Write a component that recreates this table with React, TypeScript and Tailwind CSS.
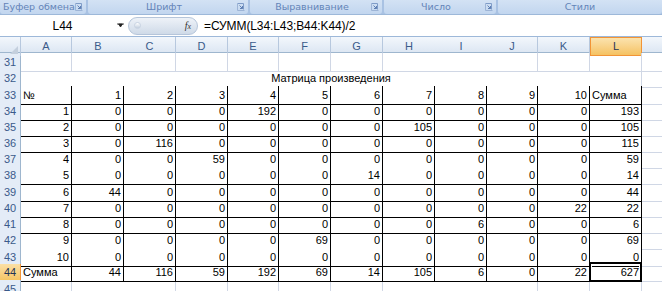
import React from 'react';

const grid =
  'grid grid-cols-[21px_51px_52px_52px_52px_51px_52px_52px_52px_52px_51px_52px_52px_20px]';

const letters = ['A', 'B', 'C', 'D', 'E', 'F', 'G', 'H', 'I', 'J', 'K', 'L'];

const data: (string | number)[][] = [
  [1, 0, 0, 0, 192, 0, 0, 0, 0, 0, 0, 193],
  [2, 0, 0, 0, 0, 0, 0, 105, 0, 0, 0, 105],
  [3, 0, 116, 0, 0, 0, 0, 0, 0, 0, 0, 115],
  [4, 0, 0, 59, 0, 0, 0, 0, 0, 0, 0, 59],
  [5, 0, 0, 0, 0, 0, 14, 0, 0, 0, 0, 14],
  [6, 44, 0, 0, 0, 0, 0, 0, 0, 0, 0, 44],
  [7, 0, 0, 0, 0, 0, 0, 0, 0, 0, 22, 22],
  [8, 0, 0, 0, 0, 0, 0, 0, 6, 0, 0, 6],
  [9, 0, 0, 0, 0, 69, 0, 0, 0, 0, 0, 69],
  [10, 0, 0, 0, 0, 0, 0, 0, 0, 0, 0, 0],
];

const totals = [44, 116, 59, 192, 69, 14, 105, 6, 0, 22, 627];

// rows with a bottom border in the table; 37 and 42 lost theirs in the screenshot
const noBottom = [37, 42];

function Launcher() {
  return (
    <svg width="8" height="8" viewBox="0 0 8 8" className="shrink-0">
      <path d="M0.5 0.5h6v6" fill="none" stroke="#7f9cc8" />
      <path d="M0.5 0.5v7h7" fill="none" stroke="#9db4d6" />
      <path d="M2.5 2.5l3 3M3 5.5h2.5V3" fill="none" stroke="#5f7fb3" />
    </svg>
  );
}

function Group({ label, w, launcher, left }: { label: string; w: string; launcher?: boolean; left?: boolean }) {
  return (
    <div className={`${w} h-full flex items-center rounded-b-[3px] bg-gradient-to-b from-[#d3e2f4] to-[#c2d6ef] px-[3px]`}>
      <span
        className={`flex-1 ${left ? 'text-left' : 'text-center'} text-[9.5px] leading-none text-[#6384b8] font-['DejaVu_Sans',sans-serif] whitespace-nowrap`}
      >
        {label}
      </span>
      {launcher && <Launcher />}
    </div>
  );
}

function RowHead({ n, active }: { n: number; active?: boolean }) {
  return active ? (
    <div className="flex items-center justify-center bg-gradient-to-b from-[#fbe0a6] to-[#f5c460] border-r border-b border-[#f29436] text-[11px] text-[#1f3556]">
      {n}
    </div>
  ) : (
    <div className="flex items-start pt-[1px] justify-center bg-[#e4ecf7] border-r border-[#9eb6ce] border-b border-b-[#c5d4e6] text-[11px] text-[#3a5a8a]">
      {n}
    </div>
  );
}

function TableRow({ n, cells, h, total }: { n: number; cells: (string | number)[]; h: string; total?: boolean }) {
  const bottom = noBottom.includes(n) ? '' : 'border-b border-b-black';
  return (
    <div className={`${grid} ${h}`}>
      <RowHead n={n} active={total} />
      {cells.map((c, i) => {
        const left = i === 0 && typeof c === 'string';
        return (
          <div
            key={i}
            className={`relative flex items-center border-r border-black ${bottom} ${left ? 'justify-start pl-[2px]' : 'justify-end pr-[2px]'}`}
          >
            {c}
            {total && i === 11 && (
              <div className="absolute inset-x-[-1px] top-[-2px] bottom-[-1px] border-2 border-black">
                <div className="h-full w-full border border-white" />
              </div>
            )}
          </div>
        );
      })}
      <div className="border-b border-[#d0d7e5]" />
    </div>
  );
}

export default function App() {
  return (
    <div className="w-[662px] h-[291px] overflow-hidden bg-white font-['Liberation_Sans',Arial,sans-serif] text-[11px] text-black">
      {/* ribbon group labels */}
      <div className="h-[14px] flex gap-[2px] bg-[#a9c2e3]">
        <Group label="Буфер обмена" w="w-[86px]" launcher left />
        <Group label="Шрифт" w="w-[160px]" launcher />
        <Group label="Выравнивание" w="w-[132px]" launcher />
        <Group label="Число" w="w-[112px]" launcher />
        <Group label="Стили" w="flex-1" />
      </div>

      {/* formula bar */}
      <div className="h-[23px] flex items-center bg-white border-t border-b border-[#9db8d9]">
        <div className="w-[126px] flex items-center">
          <span className="flex-1 text-center text-[12px] pl-[8px]">L44</span>
          <svg width="7" height="5" viewBox="0 0 7 5" className="mr-[2px]">
            <path d="M0 1h7M1.5 1l2 3l2-3z" fill="#222" stroke="#222" strokeWidth="0.8" />
          </svg>
        </div>
        <div className="ml-[2px] w-[70px] h-[18px] rounded-full bg-gradient-to-b from-[#eef2f8] to-[#cfdae8] border border-[#b5c5da] flex items-center px-[5px]">
          <div className="w-[7px] h-[7px] rounded-full bg-gradient-to-b from-white to-[#c3cfdf] border border-[#c8d3e2]" />
          <span className="ml-auto mr-[1px] text-[10px] italic font-['Liberation_Serif',serif] text-[#333]">
            f<span className="text-[8px]">x</span>
          </span>
        </div>
        <span className="ml-[6px] text-[12px] tracking-[-0.1px]">=СУММ(L34:L43;B44:K44)/2</span>
      </div>

      {/* column headers */}
      <div className={`${grid} h-[16px] border-b border-[#9eb6ce] bg-gradient-to-b from-[#f3f7fc] to-[#dde7f3]`}>
        <div className="relative border-r border-[#b7c8de]">
          <svg width="8" height="8" viewBox="0 0 8 8" className="absolute right-[2px] bottom-[2px]">
            <path d="M8 0V8H0z" fill="#c4cfdd" />
          </svg>
        </div>
        {letters.map((l, i) => {
          const sep = l === 'B' || l === 'H' || l === 'I' ? '' : 'border-r border-[#b7c8de]';
          return l === 'L' ? (
            <div key={l} className="flex items-center justify-center bg-gradient-to-b from-[#fbe3ae] to-[#f5c261] border border-[#f29436] text-[#1f3556]">
              {l}
            </div>
          ) : (
            <div key={i} className={`flex items-center justify-center text-[#3a5a8a] ${sep}`}>
              {l}
            </div>
          );
        })}
        <div />
      </div>

      {/* row 31 */}
      <div className={`${grid} h-[16px]`}>
        <RowHead n={31} />
        {letters.map((l) => (
          <div
            key={l}
            className={`border-b border-[#d0d7e5] ${l === 'B' || l === 'H' || l === 'I' ? '' : 'border-r border-r-[#d0d7e5]'}`}
          />
        ))}
        <div className="border-b border-[#d0d7e5]" />
      </div>

      {/* row 32: merged title */}
      <div className={`${grid} h-[17px]`}>
        <RowHead n={32} />
        <div className="col-span-12 flex items-end justify-center pb-[1px] border-r border-[#d0d7e5]">
          Матрица произведения
        </div>
        <div className="border-b border-[#d0d7e5]" />
      </div>

      {/* row 33: header of the matrix */}
      <div className={`${grid} h-[16px]`}>
        <RowHead n={33} />
        <div className="flex items-center pl-[2px] border-r border-b border-black">№</div>
        {[1, 2, 3, 4, 5, 6, 7, 8, 9, 10].map((k) => (
          <div key={k} className="flex items-center justify-end pr-[2px] border-r border-b border-black">
            {k}
          </div>
        ))}
        <div className="flex items-center pl-[2px] border-r border-b border-black">Сумма</div>
        <div className="border-b border-[#d0d7e5]" />
      </div>

      {data.map((r, i) => {
        const n = 34 + i;
        const h = n === 38 || n === 42 ? 'h-[17px]' : 'h-[16px]';
        return <TableRow key={n} n={n} cells={r} h={h} />;
      })}

      <TableRow n={44} cells={['Сумма', ...totals]} h="h-[16px]" total />

      {/* row 45 */}
      <div className={`${grid} h-[16px]`}>
        <RowHead n={45} />
        {letters.map((l) => (
          <div
            key={l}
            className={`border-b border-[#d0d7e5] ${l === 'B' || l === 'H' || l === 'I' ? '' : 'border-r border-r-[#d0d7e5]'}`}
          />
        ))}
        <div className="border-b border-[#d0d7e5]" />
      </div>
    </div>
  );
}
